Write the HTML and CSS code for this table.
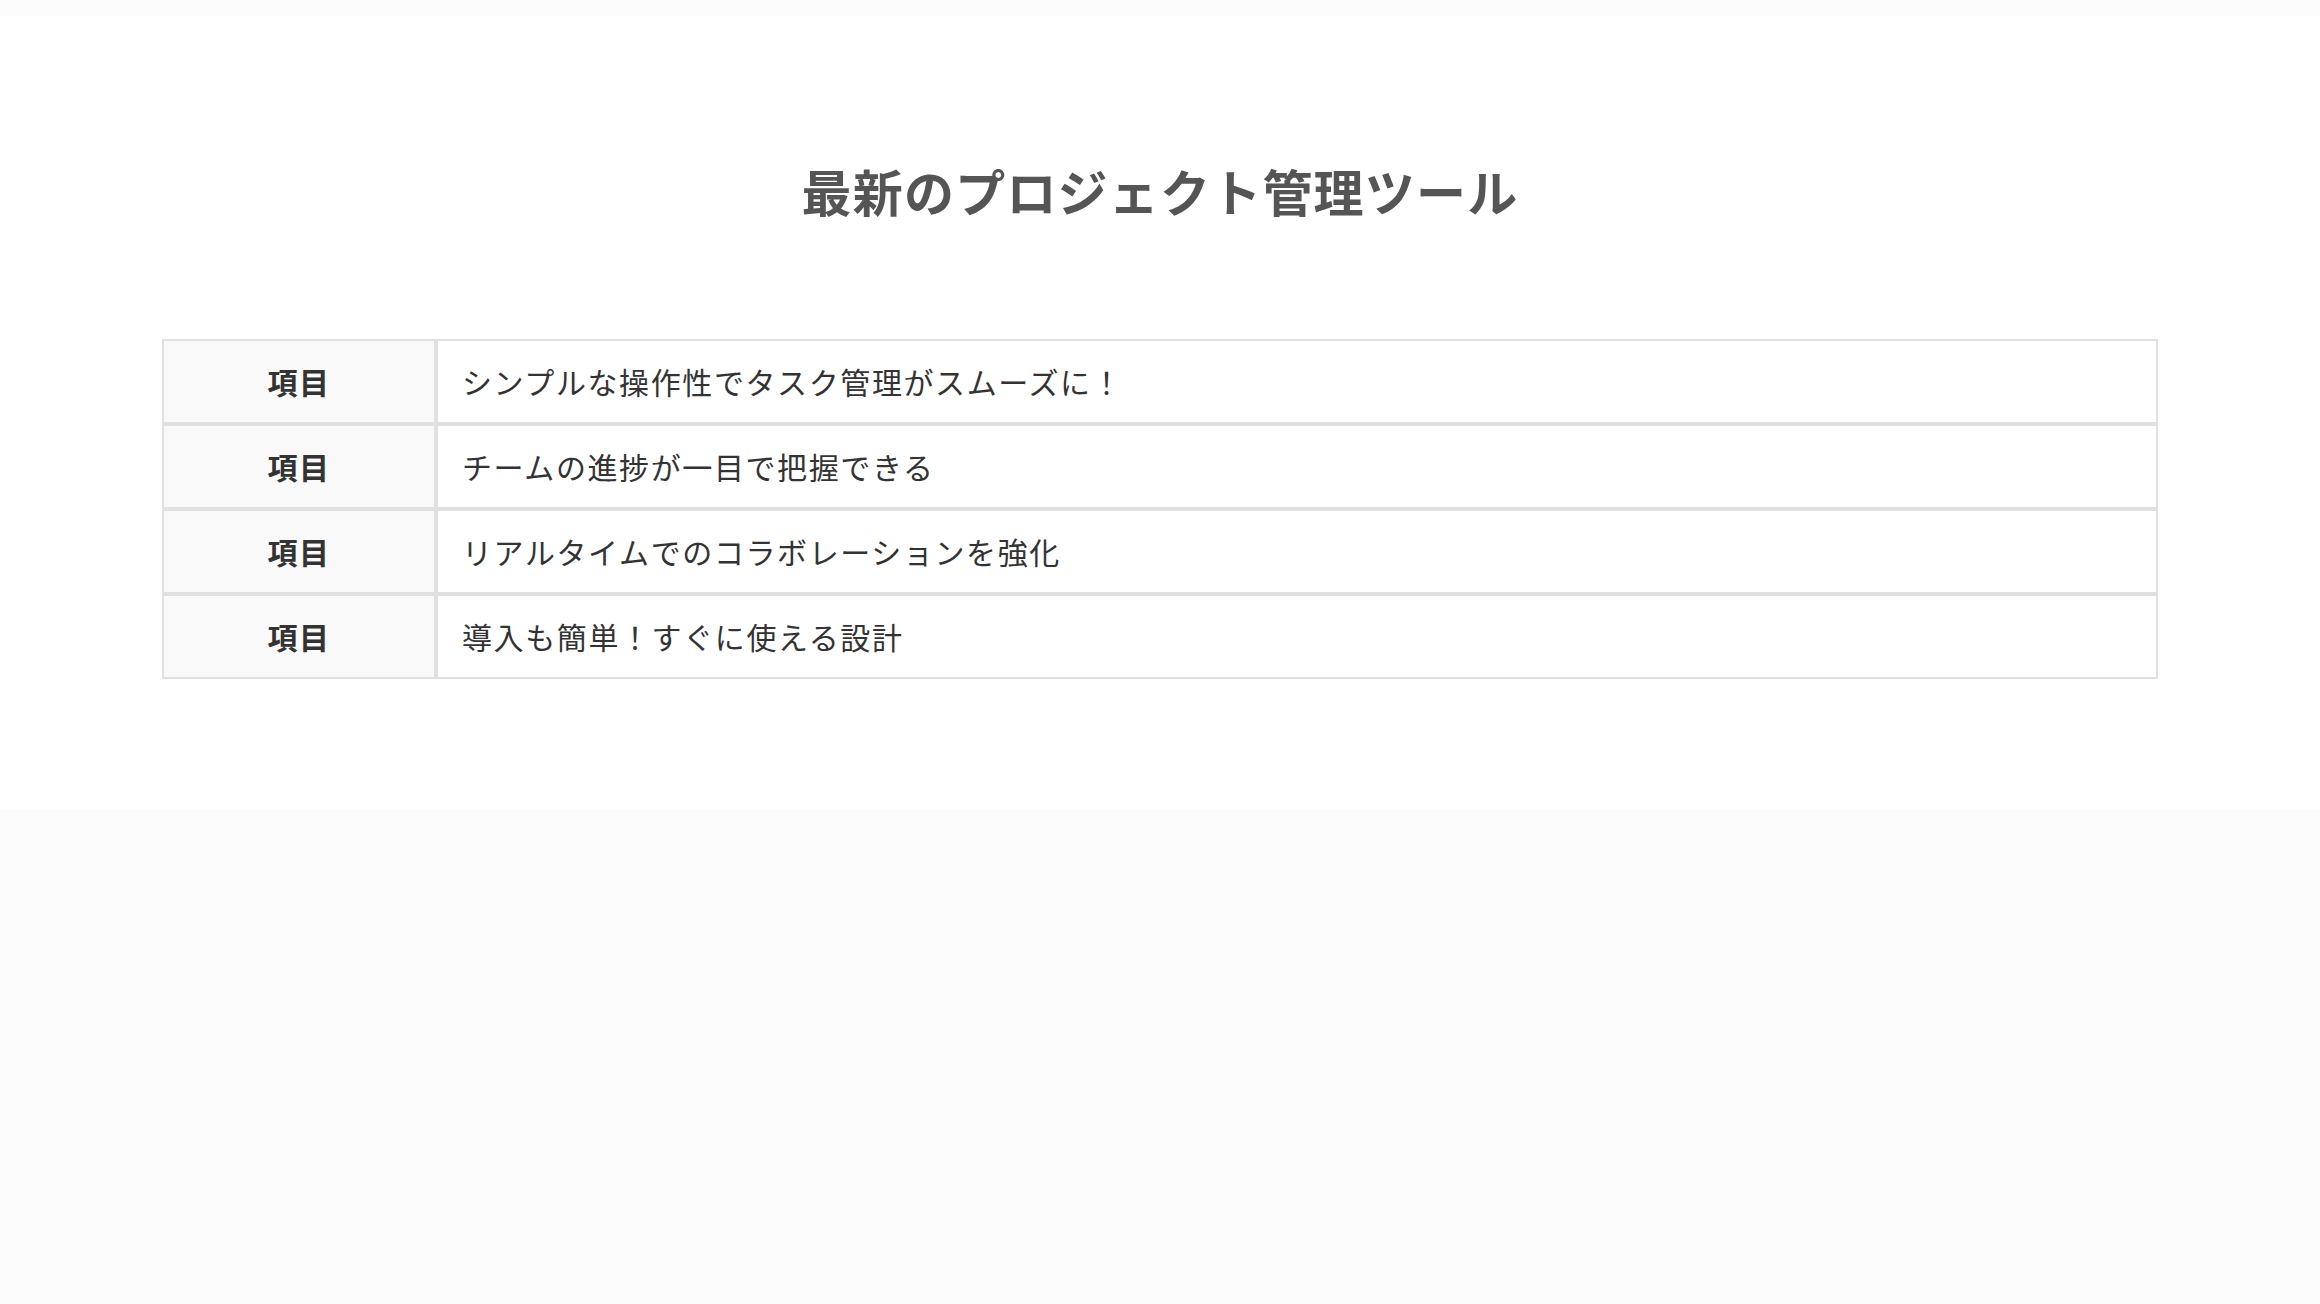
FILE: index.html
```html
<!DOCTYPE html>
<html lang="ja">
<head>
<meta charset="utf-8">
<title>最新のプロジェクト管理ツール</title>
<link rel="stylesheet" href="styles.css">
</head>
<body>
<main class="page">
  <h1 class="title">最新のプロジェクト管理ツール</h1>
  <table class="spec">
    <tbody>
      <tr><th class="label">項目</th><td class="value">シンプルな操作性でタスク管理がスムーズに！</td></tr>
      <tr><th class="label">項目</th><td class="value">チームの進捗が一目で把握できる</td></tr>
      <tr><th class="label">項目</th><td class="value">リアルタイムでのコラボレーションを強化</td></tr>
      <tr><th class="label">項目</th><td class="value">導入も簡単！すぐに使える設計</td></tr>
    </tbody>
  </table>
</main>
</body>
</html>
```
FILE: styles.css
```css
html, body {
  margin: 0;
  padding: 0;
  background: #fcfcfc;
}
body {
  font-family: "Noto Sans CJK JP", "Noto Sans", sans-serif;
  color: #333;
  padding-top: 16px;
}
.page {
  background: #fff;
  height: 793px;
  box-sizing: border-box;
  padding: 138px 162px 0;
}
.title {
  margin: 0 0 113px;
  text-align: center;
  font-size: 50px;
  line-height: 72px;
  font-weight: 700;
  letter-spacing: 1.2px;
  color: #555;
}
.spec {
  width: 100%;
  border-collapse: separate;
  border-spacing: 0;
  font-size: 30px;
  letter-spacing: 1.6px;
}
.spec th, .spec td {
  border: 2px solid #e0e0e0;
  padding: 19px 0;
  line-height: 43px;
}
.label {
  width: 270px;
  background: #f9f9f9;
  font-weight: 700;
  text-align: center;
  color: #333;
}
.value {
  text-align: left;
  padding-left: 24px !important;
  background: #fff;
  color: #333;
}
```
